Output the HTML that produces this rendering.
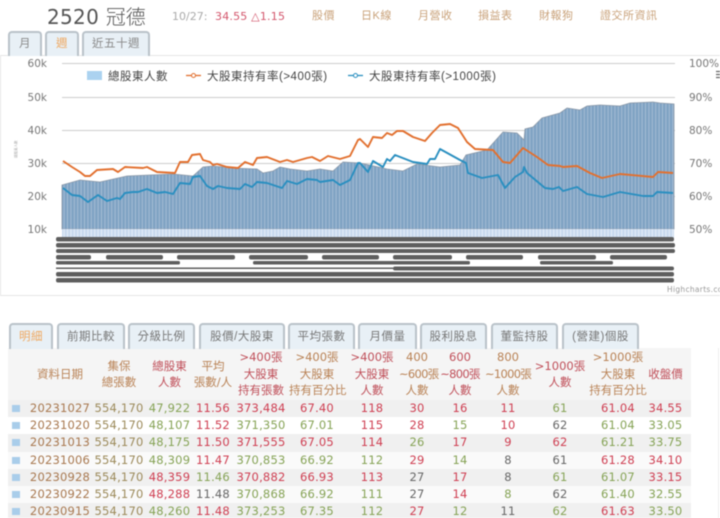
<!DOCTYPE html>
<html lang="zh-Hant">
<head>
<meta charset="utf-8">
<title>2520 冠德</title>
<style>
html,body{margin:0;padding:0;background:#fff}
body{width:720px;height:518px;overflow:hidden;position:relative}
#w{position:absolute;left:0;top:0;width:720px;height:518px;overflow:hidden;filter:blur(.4px);font-family:"DejaVu Sans","Noto Sans CJK TC",sans-serif}
.a{position:absolute;white-space:nowrap}
.lnk{top:9px;font-size:11px;color:#c9a27a;line-height:15px;font-family:"Liberation Sans","Noto Sans CJK TC",sans-serif;letter-spacing:.5px}
.t{position:absolute;box-sizing:border-box;border:2px solid #b9c2c9;border-bottom:0;border-radius:4px 4px 0 0;background:#e8f0f6;text-align:center;color:#8a8a8a;font-size:11.5px;font-family:"Liberation Sans","Noto Sans CJK TC",sans-serif;letter-spacing:.5px;white-space:nowrap}
.top{top:31px;height:25px;line-height:23px}
.bot{top:323px;height:26px;line-height:24px;color:#777}
.on{color:#efa860}
table{position:absolute;left:8px;top:348px;width:683px;table-layout:fixed;border-collapse:collapse;font-size:11.5px;font-family:"DejaVu Sans","Noto Sans CJK TC",sans-serif}
th,td{padding:0;text-align:center;white-space:nowrap;font-weight:normal}
th{height:52px;line-height:16.5px;background:#f5f5f5;color:#b98255;font-size:11.5px;vertical-align:middle}
th b{font-weight:normal;letter-spacing:-.7px}
td{height:17.2px;line-height:17px;letter-spacing:.2px}
tr.g td{background:#f0f0f0}
tr.g2 td{background:#fafafa}
.r{color:#cf3f52}.v{color:#86a356}.k{color:#666}.b{color:#a8784f}.o{color:#9c8a5a}
th.r{color:#c0505a}
i{display:block;width:8px;height:7px;background:#a9cdea;margin-left:4px}
</style>
</head>
<body>
<div id="w">
<div class="a" style="left:47px;top:3px;font-size:20px;line-height:26px;color:#555;letter-spacing:.3px">2520 <span style="font-family:'Noto Sans CJK TC',sans-serif;font-weight:300;letter-spacing:0">冠德</span></div>
<div class="a" style="left:172px;top:9px;font-size:11px;line-height:15px;color:#aaa">10/27:</div>
<div class="a" style="left:215px;top:9px;font-size:11px;line-height:15px;color:#d3566c;letter-spacing:.2px">34.55 △1.15</div>
<div class="a lnk" style="left:312px">股價</div>
<div class="a lnk" style="left:361px">日K線</div>
<div class="a lnk" style="left:418px">月營收</div>
<div class="a lnk" style="left:478px">損益表</div>
<div class="a lnk" style="left:539px">財報狗</div>
<div class="a lnk" style="left:600px">證交所資訊</div>

<svg class="a" style="left:0;top:0" width="720" height="300" viewBox="0 0 720 300">
<defs>
<pattern id="st" width="3.4" height="10" patternUnits="userSpaceOnUse"><rect width="3.4" height="10" fill="#7fa2c3"/><rect x="2.4" width="1" height="10" fill="#a5bdd5"/></pattern>
<pattern id="st2" width="3.4" height="10" patternUnits="userSpaceOnUse"><rect width="3.4" height="10" fill="#c8d9ee"/><rect x="2.4" width="1" height="10" fill="#e6eef8"/></pattern>
</defs>
<rect x="0.5" y="55.5" width="730" height="240" fill="#fff" stroke="#e6e6e6"/>
<g stroke="#cdcdcd" stroke-width="1">
<path d="M62 63.5H675M62 97.5H675M62 130.5H675M62 163.5H675M62 196.5H675"/>
</g>
<path d="M62 229 V185 L80 180 L100 182 L127 176 L150 175 L173 174 L193 176 L203 167 L213 166 L233 168 L257 169 L263 173 L273 171 L280 167 L290 169 L307 171 L320 169 L333 171 L343 162 L360 163 L387 169 L403 171 L417 164 L440 167 L460 165 L466 155 L487 150 L503 132 L517 133 L524 140 L525 129 L533 127 L542 118 L560 113 L567 108 L580 110 L587 106 L600 105 L620 106 L630 103 L653 102 L660 103 L674 104 V229 Z" fill="url(#st)" stroke="#8a97a6" stroke-width=".8"/>
<rect x="62" y="229" width="612" height="9" fill="url(#st2)"/>
<polyline fill="none" stroke="#e2702f" stroke-width="1.9" stroke-linejoin="round" points="63,161 72,167 80,172 85,176 90,176 97,170 113,169 118,172 125,167 143,168 147,167 157,172 175,173 180,162 188,162 192,155 200,154 203,160 210,162 213,165 217,164 227,167 238,168 245,162 253,165 257,158 267,157 280,162 287,160 293,162 307,158 312,157 320,161 328,156 340,159 350,156 358,140 360,139 368,147 373,137 382,138 387,133 392,135 397,131 403,131 413,137 425,141 432,133 440,125 450,124 458,128 467,142 475,149 493,150 503,162 510,163 517,155 523,148 537,157 548,165 560,166 563,167 577,166 590,173 602,178 620,174 653,177 658,172 673,173"/>
<polyline fill="none" stroke="#2a8fc0" stroke-width="1.9" stroke-linejoin="round" points="63,188 72,195 80,196 88,202 98,195 107,201 117,198 120,199 125,193 133,192 138,192 147,189 157,193 165,192 173,194 180,183 190,184 193,177 200,176 207,186 213,189 218,186 227,188 240,189 245,184 252,187 257,182 267,183 282,188 287,181 297,184 307,179 317,180 320,182 333,180 340,185 350,180 358,163 360,163 368,172 373,161 383,167 387,159 390,161 395,155 413,162 427,164 430,159 435,159 440,149 460,160 466,163 468,173 482,178 498,175 505,188 515,177 523,172 524,167 527,173 545,188 553,189 559,187 563,191 577,187 587,194 603,197 620,192 643,196 653,196 657,192 673,193"/>
<g fill="#5e5e5e">
<rect x="56" y="237" width="618" height="4.5" rx="2"/>
<rect x="56" y="243" width="619" height="4.5" rx="2"/>
<rect x="56" y="249" width="619" height="4" rx="2"/>
<rect x="56" y="255" width="35" height="4.5" rx="2"/><rect x="106" y="255" width="57" height="4.5" rx="2"/><rect x="177" y="255" width="58" height="4.5" rx="2"/><rect x="249" y="255" width="59" height="4.5" rx="2"/><rect x="322" y="255" width="57" height="4.5" rx="2"/><rect x="393" y="255" width="59" height="4.5" rx="2"/><rect x="466" y="255" width="57" height="4.5" rx="2"/><rect x="538" y="255" width="58" height="4.5" rx="2"/><rect x="610" y="255" width="57" height="4.5" rx="2"/>
<rect x="56" y="261" width="124" height="3.5" rx="1.5"/><rect x="253" y="261" width="217" height="3.5" rx="1.5"/><rect x="540" y="261" width="73" height="3.5" rx="1.5"/>
<rect x="56" y="267.5" width="337" height="1.5"/><rect x="393" y="266.5" width="281" height="4" rx="2"/>
<rect x="56" y="272" width="618" height="4.5" rx="2"/>
<rect x="56" y="278" width="618" height="4.5" rx="2"/>
</g>
<g font-family="'DejaVu Sans',sans-serif" font-size="10.5" fill="#777" text-anchor="end">
<text x="47" y="67">60k</text><text x="47" y="101">50k</text><text x="47" y="134">40k</text><text x="47" y="167">30k</text><text x="47" y="200">20k</text><text x="47" y="233">10k</text>
</g>
<g font-family="'DejaVu Sans',sans-serif" font-size="10.5" fill="#777">
<text x="689" y="67">100%</text><text x="689" y="101">90%</text><text x="689" y="134">80%</text><text x="689" y="167">70%</text><text x="689" y="200">60%</text><text x="689" y="233">50%</text>
</g>
<text transform="translate(17,158) rotate(-90)" font-family="'Noto Sans CJK TC',sans-serif" font-size="3.5" fill="#aaa">總股東人數</text>
<rect x="87" y="71" width="15" height="9" fill="#abd2f0"/>
<g font-family="'Liberation Sans','Noto Sans CJK TC',sans-serif" font-size="11.5" fill="#444" letter-spacing=".5">
<text x="108" y="80">總股東人數</text>
<text x="207" y="80">大股東持有率(&gt;400張)</text>
<text x="369" y="80">大股東持有率(&gt;1000張)</text>
</g>
<path d="M186 75.5H201" stroke="#e2702f" stroke-width="1.3"/><circle cx="193.5" cy="75.5" r="2" fill="#fff" stroke="#e2702f"/>
<path d="M348 75.5H363" stroke="#2a8fc0" stroke-width="1.3"/><circle cx="355.5" cy="75.5" r="2" fill="#fff" stroke="#2a8fc0"/>
<path d="M716 71.5H721M716 74.5H721M716 77.5H721" stroke="#666" stroke-width="1.3"/>
<text x="667" y="292" font-family="'DejaVu Sans',sans-serif" font-size="7.5" fill="#999" letter-spacing=".3">Highcharts.com</text>
</svg>

<div class="t top" style="left:8px;width:34px">月</div>
<div class="t top on" style="left:45px;width:34px">週</div>
<div class="t top" style="left:82px;width:68px">近五十週</div>

<div class="a" style="left:8px;top:348px;width:710px;height:170px;border-right:1px solid #eee"></div>
<table>
<colgroup>
<col style="width:20px"><col style="width:64px"><col style="width:54px"><col style="width:47px"><col style="width:40px"><col style="width:56px"><col style="width:56px"><col style="width:54px"><col style="width:36px"><col style="width:50px"><col style="width:46px"><col style="width:58px"><col style="width:58px"><col style="width:37px"><col style="width:7px">
</colgroup>
<tr>
<th></th><th>資料日期</th><th>集保<br>總張數</th><th class="r">總股東<br>人數</th><th>平均<br>張數/人</th><th class="r">&gt;400張<br>大股東<br>持有張數</th><th>&gt;400張<br>大股東<br>持有百分比</th><th class="r">&gt;400張<br>大股東<br>人數</th><th>400<br><b>~600張</b><br>人數</th><th class="r">600<br><b>~800張</b><br>人數</th><th>800<br><b>~1000張</b><br>人數</th><th class="r">&gt;1000張<br>人數</th><th>&gt;1000張<br>大股東<br>持有百分比</th><th class="r">收盤價</th><th></th>
</tr>
<tr class="g"><td><i></i></td><td class="b">20231027</td><td class="o">554,170</td><td class="v">47,922</td><td class="r">11.56</td><td class="r">373,484</td><td class="r">67.40</td><td class="r">118</td><td class="r">30</td><td class="r">16</td><td class="r">11</td><td class="v">61</td><td class="r">61.04</td><td class="r">34.55</td><td></td></tr>
<tr><td><i></i></td><td class="b">20231020</td><td class="o">554,170</td><td class="v">48,107</td><td class="r">11.52</td><td class="v">371,350</td><td class="v">67.01</td><td class="r">115</td><td class="r">28</td><td class="v">15</td><td class="r">10</td><td class="k">62</td><td class="v">61.04</td><td class="v">33.05</td><td></td></tr>
<tr class="g"><td><i></i></td><td class="b">20231013</td><td class="o">554,170</td><td class="v">48,175</td><td class="r">11.50</td><td class="r">371,555</td><td class="r">67.05</td><td class="r">114</td><td class="v">26</td><td class="r">17</td><td class="r">9</td><td class="r">62</td><td class="v">61.21</td><td class="v">33.75</td><td></td></tr>
<tr class="g2"><td><i></i></td><td class="b">20231006</td><td class="o">554,170</td><td class="v">48,309</td><td class="r">11.47</td><td class="v">370,853</td><td class="v">66.92</td><td class="v">112</td><td class="r">29</td><td class="v">14</td><td class="k">8</td><td class="k">61</td><td class="r">61.28</td><td class="r">34.10</td><td></td></tr>
<tr class="g"><td><i></i></td><td class="b">20230928</td><td class="o">554,170</td><td class="r">48,359</td><td class="v">11.46</td><td class="r">370,882</td><td class="r">66.93</td><td class="r">113</td><td class="k">27</td><td class="r">17</td><td class="k">8</td><td class="v">61</td><td class="v">61.07</td><td class="r">33.15</td><td></td></tr>
<tr class="g2"><td><i></i></td><td class="b">20230922</td><td class="o">554,170</td><td class="r">48,288</td><td class="k">11.48</td><td class="v">370,868</td><td class="v">66.92</td><td class="v">111</td><td class="k">27</td><td class="r">14</td><td class="v">8</td><td class="k">62</td><td class="v">61.40</td><td class="v">32.55</td><td></td></tr>
<tr class="g"><td><i></i></td><td class="b">20230915</td><td class="o">554,170</td><td class="v">48,260</td><td class="r">11.48</td><td class="v">373,253</td><td class="v">67.35</td><td class="v">112</td><td class="r">27</td><td class="v">12</td><td class="k">11</td><td class="v">62</td><td class="r">61.63</td><td class="v">33.50</td><td></td></tr>
</table>

<div class="t bot on" style="left:9px;width:44px">明細</div>
<div class="t bot" style="left:57px;width:68px">前期比較</div>
<div class="t bot" style="left:128px;width:67px">分級比例</div>
<div class="t bot" style="left:199px;width:86px">股價/大股東</div>
<div class="t bot" style="left:288px;width:67px">平均張數</div>
<div class="t bot" style="left:358px;width:59px">月價量</div>
<div class="t bot" style="left:420px;width:67px">股利股息</div>
<div class="t bot" style="left:491px;width:67px">董監持股</div>
<div class="t bot" style="left:562px;width:77px">(營建)個股</div>
</div>
</body>
</html>
